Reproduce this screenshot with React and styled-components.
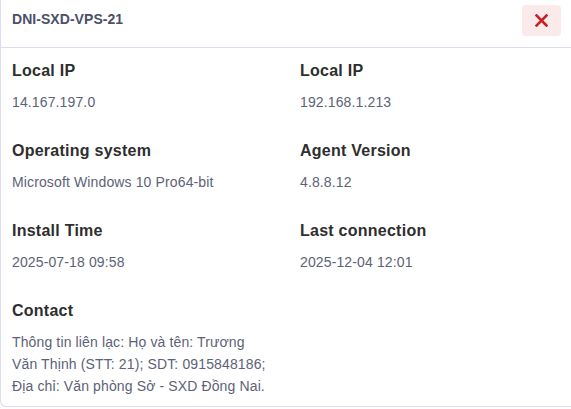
import React from 'react';
import styled, { createGlobalStyle } from 'styled-components';

const GlobalStyle = createGlobalStyle`
  html, body {
    margin: 0;
    padding: 0;
    background: #ffffff;
  }
  body {
    font-family: "Liberation Sans", Arial, sans-serif;
  }
`;

const Panel = styled.div`
  box-sizing: border-box;
  width: 100%;
  height: 407px;
  border-left: 1px solid #dcdcf3;
  border-bottom: 1px solid #dcdcf3;
  border-bottom-left-radius: 6px;
  background: #fff;
  overflow: hidden;
`;

const Header = styled.div`
  box-sizing: border-box;
  display: flex;
  justify-content: space-between;
  align-items: flex-start;
  height: 48px;
  padding: 5px 10px 0 11px;
  border-bottom: 1px solid #dcdcf3;
`;

const Title = styled.h3`
  margin: 4px 0 0;
  font-size: 14px;
  line-height: 20px;
  font-weight: 700;
  letter-spacing: 0.05px;
  color: #4b5068;
`;

const CloseButton = styled.button`
  display: flex;
  align-items: center;
  justify-content: center;
  width: 39px;
  height: 31px;
  padding: 0;
  border: none;
  border-radius: 4px;
  background: #fbeaea;
  cursor: pointer;
`;

const Body = styled.div`
  display: grid;
  grid-template-columns: 288px 1fr;
  row-gap: 27px;
  padding: 12px 11px 0;
`;

const Field = styled.div`
  display: flex;
  flex-direction: column;
  gap: 9px;
`;

const Label = styled.div`
  font-size: 16px;
  line-height: 22px;
  font-weight: 700;
  letter-spacing: 0.25px;
  color: #2e2e2e;
`;

const Value = styled.div`
  font-size: 14px;
  line-height: 22px;
  letter-spacing: 0.13px;
  color: #5d6277;
  max-width: ${(p) => (p.$narrow ? '259px' : 'none')};
`;

const fields = [
  ['Local IP', '14.167.197.0'],
  ['Local IP', '192.168.1.213'],
  ['Operating system', 'Microsoft Windows 10 Pro64-bit'],
  ['Agent Version', '4.8.8.12'],
  ['Install Time', '2025-07-18 09:58'],
  ['Last connection', '2025-12-04 12:01'],
];

export default function App() {
  return (
    <>
      <GlobalStyle />
      <Panel>
        <Header>
          <Title>DNI-SXD-VPS-21</Title>
          <CloseButton aria-label="Close">
            <svg width="13" height="13" viewBox="0 0 13 13">
              <path
                d="M1.5 1.5 L11.5 11.5 M11.5 1.5 L1.5 11.5"
                stroke="#cc1f24"
                strokeWidth="2.6"
                strokeLinecap="square"
              />
            </svg>
          </CloseButton>
        </Header>
        <Body>
          {fields.map(([label, value], i) => (
            <Field key={i}>
              <Label>{label}</Label>
              <Value>{value}</Value>
            </Field>
          ))}
          <Field>
            <Label>Contact</Label>
            <Value $narrow>
              Thông tin liên lạc: Họ và tên: Trương Văn Thịnh (STT: 21); SDT: 0915848186; Địa chỉ: Văn phòng Sở - SXD Đồng Nai.
            </Value>
          </Field>
        </Body>
      </Panel>
    </>
  );
}
